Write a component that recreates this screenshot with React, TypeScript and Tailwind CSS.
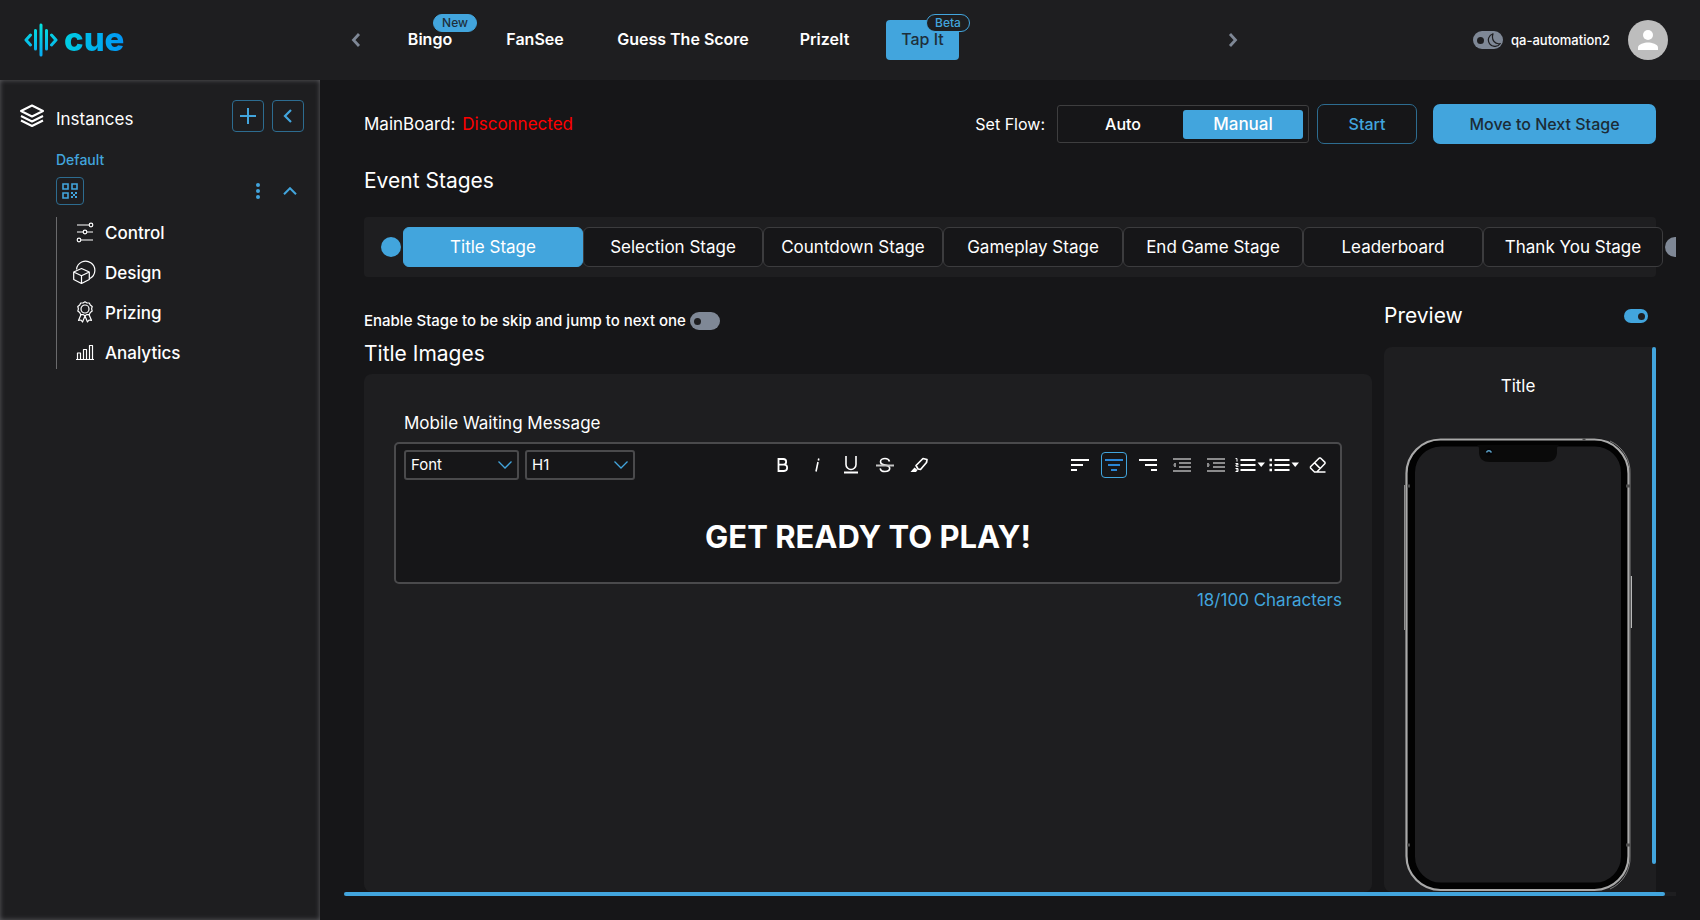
import React, { useState } from "react";

function Logo() {
  return (
    <a href="#" aria-label="cue" className="flex items-center gap-[6px]">
      <svg width="34" height="34" viewBox="0 0 34 34" fill="none" strokeLinecap="round" strokeLinejoin="round">
        <defs>
          <linearGradient id="mark" x1="0" y1="0" x2="0" y2="34" gradientUnits="userSpaceOnUse">
            <stop stopColor="#04e3dc" />
            <stop offset="1" stopColor="#08a8f2" />
          </linearGradient>
        </defs>
        <g stroke="url(#mark)" strokeWidth="3">
          <path d="M17.010 2L17 32M11.510 7.500l-.010 18.500M22.510 7.500l-.010 18.500" />
          <path d="M6.500 12L2 17l4.500 5M27.500 12l4.500 5-4.500 5" />
        </g>
      </svg>
      <span className="bg-gradient-to-r from-[#04cfe2] to-[#0494f4] bg-clip-text pb-[2px] text-[33px] leading-[38px] font-extrabold text-transparent">
        cue
      </span>
    </a>
  );
}

const games = [
  { name: "Bingo", width: "w-[74px]", badge: "New" },
  { name: "FanSee", width: "w-[88px]" },
  { name: "Guess The Score", width: "w-[160px]" },
  { name: "PrizeIt", width: "w-[75px]" },
  { name: "Tap It", width: "w-[73px]", badge: "Beta", active: true },
];

function Arrow({ flip = false }: { flip?: boolean }) {
  return (
    <svg width="10" height="14" viewBox="0 0 10 14" fill="none" stroke="#7f8896" strokeWidth="2.800">
      <path d={flip ? "M2 1l5.500 6L2 13" : "M8 1L2.500 7 8 13"} />
    </svg>
  );
}

function Header() {
  return (
    <header className="flex h-20 shrink-0 items-center bg-[#1e1e20] pr-8 pl-6">
      <div className="w-[327px] shrink-0">
        <Logo />
      </div>
      <button aria-label="Previous games">
        <Arrow />
      </button>
      <nav className="ml-8 flex w-[835px] shrink-0 items-center gap-6">
        {games.map((g) => (
          <button
            key={g.name}
            className={`relative h-10 rounded-[4px] pb-[2px] text-base whitespace-nowrap ${g.width} ${g.active ? "bg-[#42a5dd] font-medium text-[#1e2f3b]" : "font-semibold text-white"}`}
          >
            {g.name}
            {g.badge && (
              <span
                className={`absolute -top-[6px] left-10 flex h-[18px] w-11 items-center justify-center rounded-full border border-[#42a5dd] text-xs font-medium ${g.active ? "bg-[#1e1e20] text-[#42a5dd]" : "bg-[#42a5dd] text-[#1e2f3b]"}`}
              >
                {g.badge}
              </span>
            )}
          </button>
        ))}
      </nav>
      <button aria-label="Next games">
        <Arrow flip />
      </button>
      <div className="ml-auto flex items-center">
        <button aria-label="Dark mode" className="flex h-[18px] w-[30px] items-center justify-between rounded-full bg-[#7f8896] pr-[2px] pl-1">
          <span className="size-[7px] rounded-full bg-[#1e1e20]" />
          <svg width="14" height="14" viewBox="0 0 14 14" fill="none" stroke="#1e1e20" strokeWidth="1.200" strokeLinejoin="round">
            <path d="M6 .700A6.500 6.500 0 1 0 13.300 10.500Q9.500 11.500 7 8.500T6 .700z" />
          </svg>
        </button>
        <span className="mx-2 w-[101px] pt-[2px] text-[13px] font-medium whitespace-nowrap text-white">qa-automation2</span>
        <button aria-label="Account" className="ml-2 flex size-10 items-center justify-center rounded-full bg-[#bdbdbd]">
          <svg width="20" height="20" viewBox="0 0 20 20" fill="#fff">
            <circle cx="10" cy="5" r="5" />
            <path d="M0 20v-2.500C0 14 6.500 12.500 10 12.500s10 1.500 10 5V20z" />
          </svg>
        </button>
      </div>
    </header>
  );
}

const menu = [
  {
    name: "Control",
    icon: (
      <>
        <path d="M4 5h12M4 12h6M14 12h6M8 20h12" />
        <circle cx="18" cy="5" r="1.800" />
        <circle cx="12" cy="12" r="1.800" />
        <circle cx="6" cy="20" r="1.800" />
      </>
    ),
  },
  {
    name: "Design",
    icon: (
      <>
        <path d="M3.500 9.500A9.200 9.200 0 1 1 17 18.500" />
        <path d="M8.500 8.500l7.800 3.500v7.500L8.500 23.500.700 19.500V12zM.700 12l7.800 3.700 7.800-3.700M8.500 15.700v7.800" />
      </>
    ),
  },
  {
    name: "Prizing",
    icon: (
      <>
        <circle cx="12" cy="9" r="4" />
        <path d="M12 1.800l2 1.200 2.300 0 1 2.100 1.900 1.400-.600 2.300.600 2.300-1.900 1.400-1 2.100-2.300 0-2 1.200-2-1.200-2.300 0-1-2.100-1.900-1.400.600-2.300-.600-2.300 1.900-1.400 1-2.100 2.300 0z" />
        <path d="M8 14.500L5.500 20.500l2.500-.5 1.500 2 2.500-6 2.500 6 1.500-2 2.500.5L16 14.500" />
      </>
    ),
  },
  {
    name: "Analytics",
    icon: <path d="M3 19.500h18M4.500 19.500v-6.500h3v6.500M10.500 19.500v-10h3v10M16.500 19.500v-14h3v14" />,
  },
];

function Sidebar() {
  return (
    <aside className="w-80 shrink-0 bg-[#1e1e20] px-4 pt-5 shadow-[inset_0_0_5px_#5e5e62]">
      <div className="flex items-center pl-1">
        <svg width="24" height="24" viewBox="0 0 24 24" fill="none" stroke="#fff" strokeWidth="2" strokeLinejoin="round">
          <path d="M12 1.500L23 7 12 12.500 1 7zM1 12l11 5.500L23 12M1 16.500L12 22l11-5.500" />
        </svg>
        <h2 className="ml-3 flex-1 pt-[6px] text-[17px] leading-6">Instances</h2>
        <button aria-label="Add instance" className="flex size-8 items-center justify-center rounded-[4px] border border-[#2d6c90]">
          <svg width="16" height="16" viewBox="0 0 16 16" stroke="#42a5dd" strokeWidth="2">
            <path d="M8 0v16M0 8h16" />
          </svg>
        </button>
        <button aria-label="Collapse sidebar" className="ml-2 flex size-8 items-center justify-center rounded-[4px] border border-[#2d6c90]">
          <svg width="10" height="14" viewBox="0 0 10 14" fill="none" stroke="#42a5dd" strokeWidth="2.200">
            <path d="M8 1L2 7l6 6" />
          </svg>
        </button>
      </div>
      <div className="pl-10">
        <a href="#" className="mt-[18px] block text-sm leading-5 font-medium text-[#42a5dd]">
          Default
        </a>
        <div className="mt-[7px] flex items-center pr-[7px]">
          <button aria-label="QR code" className="flex size-7 items-center justify-center rounded-[4px] border border-[#2d6c90]">
            <svg width="16" height="16" viewBox="0 0 16 16" fill="none" stroke="#42a5dd" strokeWidth="1.600">
              <path d="M1 1h5v5H1zM10 1h5v5h-5zM1 10h5v5H1z" />
              <path
                d="M9 9h2v2H9zM13 9h2v2h-2zM11 11h2v2h-2zM9 13h2v2H9zM13 13h2v2h-2z"
                fill="#42a5dd"
                stroke="none"
              />
            </svg>
          </button>
          <button aria-label="More" className="ml-auto">
            <svg width="4" height="16" viewBox="0 0 4 16" fill="#42a5dd">
              <circle cx="2" cy="2" r="2" />
              <circle cx="2" cy="8" r="2" />
              <circle cx="2" cy="14" r="2" />
            </svg>
          </button>
          <button aria-label="Collapse" className="ml-[23px]">
            <svg width="14" height="8" viewBox="0 0 14 8" fill="none" stroke="#42a5dd" strokeWidth="2">
              <path d="M1 7.200l6-6 6 6" />
            </svg>
          </button>
        </div>
        <ul className="mt-3 border-l border-[#6a6a6c]">
          {menu.map((m, i) => (
            <li key={m.name}>
              <a
                href="#"
                className={`flex items-center pl-4 text-[17px] leading-6 font-medium ${i === 0 ? "h-[35px] pb-[5px]" : i === 3 ? "h-[37px] pt-[3px]" : "h-10"}`}
              >
                <svg width="24" height="24" viewBox="0 0 24 24" fill="none" stroke="#fff" strokeWidth="1.200" strokeLinejoin="round">
                  {m.icon}
                </svg>
                <span className="ml-2 pt-px">{m.name}</span>
              </a>
            </li>
          ))}
        </ul>
      </div>
    </aside>
  );
}

const stages = ["Title Stage", "Selection Stage", "Countdown Stage", "Gameplay Stage", "End Game Stage", "Leaderboard", "Thank You Stage"];

function Tool({ label, children }: { label: string; children: React.ReactNode }) {
  return (
    <button aria-label={label} className="flex h-[30px] w-[34px] items-center justify-center">
      {children}
    </button>
  );
}

function Bars({ d, color = "#fff" }: { d: string; color?: string }) {
  return (
    <svg width="18" height="14" viewBox="0 0 18 14" fill="none" stroke={color} strokeWidth="2">
      <path d={d} />
    </svg>
  );
}

function SelectBox({ label, value, width }: { label: string; value: string; width: string }) {
  return (
    <div className={`relative ${width}`}>
      <select
        aria-label={label}
        className="h-[30px] w-full appearance-none rounded-[3px] border-2 border-[#4a4a4c] bg-[#161618] pl-[5px] text-[15px] leading-5 text-white"
      >
        <option>{value}</option>
      </select>
      <svg className="pointer-events-none absolute top-[11px] right-[7px]" width="14" height="8" viewBox="0 0 14 8" fill="none" stroke="#42a5dd" strokeWidth="1.300">
        <path d="M.500.500L7 7l6.500-6.500" />
      </svg>
    </div>
  );
}

function Editor() {
  return (
    <div className="h-[142px] rounded-[5px] border-2 border-[#4a4a4c] bg-[#161618] pt-[6px] pr-[5px] pl-2">
      <div className="flex items-center justify-between">
        <div className="flex gap-[6px]">
          <SelectBox label="Font" value="Font" width="w-[115px]" />
          <SelectBox label="Heading" value="H1" width="w-[110px]" />
        </div>
        <div className="flex pl-1">
          <Tool label="Bold">
            <svg width="12" height="16" viewBox="0 0 12 16" fill="none" stroke="#fff" strokeWidth="1.800">
              <path d="M1.500 2h4.800a2.800 2.800 0 0 1 0 5.700H1.500zM1.500 7.700h5.500a3.100 3.100 0 0 1 0 6.300H1.500z" />
            </svg>
          </Tool>
          <Tool label="Italic">
            <svg width="8" height="16" viewBox="0 0 8 16" fill="none" stroke="#fff" strokeWidth="1.600">
              <path d="M5 5L3 14.500M5.800 1.500l-.4 2" />
            </svg>
          </Tool>
          <Tool label="Underline">
            <svg width="14" height="18" viewBox="0 0 14 18" fill="none" stroke="#fff" strokeWidth="1.600">
              <path d="M2 0v8.500a5 5 0 0 0 10 0V0" />
              <path d="M0 16.500h14" strokeWidth="2" />
            </svg>
          </Tool>
          <Tool label="Strikethrough">
            <svg width="18" height="16" viewBox="0 0 18 16" fill="none" stroke="#fff" strokeWidth="1.600">
              <path d="M13.500 4.500C13 2.500 11.500 1.500 9 1.500S4.500 2.800 4.500 4.700 6 7.500 9 8s4.700 1.500 4.700 3.300-2 3.200-4.700 3.200-4.500-1.200-4.800-3.200" />
              <path d="M0 8.500h18" stroke="#c4c4c4" strokeWidth="2" />
            </svg>
          </Tool>
          <Tool label="Highlight">
            <svg width="18" height="16" viewBox="0 0 18 16" fill="none" stroke="#fff" strokeWidth="1.700" strokeLinejoin="round">
              <path d="M6 8.500L13 1.500 17 2.500 16.500 5.500 10.500 12.500 8 12z" />
              <path d="M4.500 10.500l3 2.500-1.500 2H.500z" fill="#fff" stroke="none" />
            </svg>
          </Tool>
        </div>
        <div className="flex">
          <Tool label="Align left">
            <Bars d="M0 2h18M0 7h12M0 12h6" />
          </Tool>
          <Tool label="Align center">
            <span className="flex size-[26px] shrink-0 items-center justify-center rounded-[4px] border border-[#42a5dd]">
              <Bars color="#2b86d6" d="M0 2h18M3 7h12M6 12h6" />
            </span>
          </Tool>
          <Tool label="Align right">
            <Bars d="M0 2h18M6 7h12M12 12h6" />
          </Tool>
          <Tool label="Outdent">
            <Bars color="#8b8b8c" d="M0 1h18M6 5h12M6 9h12M0 13h18M2 5v4M1 6.500v1" />
          </Tool>
          <Tool label="Indent">
            <Bars color="#8b8b8c" d="M0 1h18M6 5h12M6 9h12M0 13h18M1 5v4M2 6.500v1" />
          </Tool>
          <Tool label="Numbered list">
            <svg width="30" height="14" viewBox="0 0 30 14" fill="none" stroke="#fff" strokeWidth="2">
              <path d="M5.500 2h15M5.500 7h15M5.500 12h15" />
              <path d="M.500.600h1.500v3M.500 5.500h2.500v1.300H1v1.500h2.500M.500 10.500h2.500v3H.500M1 12h2" strokeWidth="1" />
              <path d="M22.500 4.500h7.500L26.200 9z" fill="#fff" stroke="none" />
            </svg>
          </Tool>
          <Tool label="Bulleted list">
            <svg width="30" height="14" viewBox="0 0 30 14" fill="none" stroke="#fff" strokeWidth="2">
              <path d="M5.500 2h15M5.500 7h15M5.500 12h15" />
              <path d="M.500 2h2.500M.500 7h2.500M.500 12h2.500" strokeWidth="2.600" />
              <path d="M22.500 4.500h7.500L26.200 9z" fill="#fff" stroke="none" />
            </svg>
          </Tool>
          <Tool label="Clear formatting">
            <svg width="18" height="16" viewBox="0 0 18 16" fill="none" stroke="#fff" strokeWidth="1.500" strokeLinejoin="round">
              <path d="M5.500 15L1.500 11V9.800L10.300 1h1.200L16 5.400v1.200L7.800 15zM5 15h11.500M5.600 5.900l5.500 5.500" />
            </svg>
          </Tool>
        </div>
      </div>
      <div className="flex justify-center pt-[33px] pr-[3px]">
        <h1 className="text-[31px] leading-[48px] font-bold">GET READY TO PLAY!</h1>
      </div>
    </div>
  );
}

function Phone() {
  return (
    <svg className="mt-10 shrink-0" width="228" height="456" viewBox="0 0 228 456" fill="none">
      <path d="M.500 47v145" stroke="#8f8f8f" />
      <path d="M227.500 138v52" stroke="#b9b9b9" strokeWidth="1.400" />
      <rect x="7" y="4.500" width="214" height="444" rx="30" stroke="#020202" strokeWidth="8" />
      <rect x="2.500" y="1.500" width="222" height="450.500" rx="34" stroke="#a9a9a9" strokeWidth="2.200" />
      <path d="M206 3a34 34 0 0 1 20 33v382a34 34 0 0 1-20 33" stroke="#7a7a7a" strokeWidth="1" />
      <path d="M180 .500v2M3 48h3M222 48h4M3 407h3M222 407h4" stroke="#4c4c4c" strokeWidth="3" />
      <path d="M72 7h84q-3 0-3 4v3q0 10-11 10H86q-11 0-11-10v-3q0-4-3-4z" fill="#0a0a0a" />
      <circle cx="85" cy="14" r="3.500" fill="#050508" />
      <path d="M82.500 14.500q1-2.500 3.500-1.500l1.500 1.500" stroke="#5a9fc4" strokeWidth="1.500" />
    </svg>
  );
}

export default function App() {
  const [skip, setSkip] = useState(false);
  return (
    <div className="flex h-screen flex-col overflow-hidden bg-[#161618] font-['Inter','Open_Sans',sans-serif] text-white">
      <Header />
      <div className="flex min-h-0 flex-1">
        <Sidebar />
        <main className="mr-6 mb-6 ml-6 flex min-w-0 flex-1 flex-col overflow-hidden pt-6">
          <div className="flex shrink-0 items-center pr-5 pl-5">
            <p className="text-[17px] leading-6">
              MainBoard: <span className="ml-[2px] text-[#ff0000]">Disconnected</span>
            </p>
            <span className="mr-3 ml-auto text-base">Set Flow:</span>
            <div className="mr-2 flex h-[38px] w-[252px] items-center rounded-[3px] border border-[#3e3e3f] px-[5px]">
              <button className="h-[29px] flex-1 pb-px text-base font-medium">Auto</button>
              <button className="h-[29px] flex-1 rounded-[3px] bg-[#42a5dd] pb-px text-[17px] leading-6 font-medium">Manual</button>
            </div>
            <button className="mr-4 h-10 w-[100px] rounded-[7px] border border-[#2d6c90] pb-px text-base font-medium text-[#42a5dd]">
              Start
            </button>
            <button className="h-10 w-[223px] rounded-[7px] bg-[#42a5dd] pb-px text-base font-medium text-[#1c2c36]">Move to Next Stage</button>
          </div>

          <h2 className="mt-[23px] shrink-0 pl-5 text-[21px] leading-7">Event Stages</h2>
          <div className="mx-5 mt-[22px] flex h-[60px] shrink-0 items-center rounded-[4px] bg-[#1e1e20] pl-[17px]">
            <span className="size-5 shrink-0 rounded-full bg-[#42a5dd]" />
            <div className="mr-[2px] ml-[2px] flex shrink-0">
              {stages.map((s, i) => (
                <button
                  key={s}
                  className={`h-10 w-[180px] rounded-[6px] border pb-px text-[17px] leading-6 ${i === 0 ? "border-[#42a5dd] bg-[#42a5dd]" : "border-[#3c3c3e] bg-[#161618]"}`}
                >
                  {s}
                </button>
              ))}
            </div>
            <span className="size-5 shrink-0 rounded-full bg-[#7f8896]" />
          </div>

          <div className="flex min-h-0 flex-1 gap-3 pr-5 pl-5">
            <section className="flex flex-1 flex-col pt-[34px]">
              <div className="flex h-5 items-center gap-1">
                <span className="text-[15px] leading-5 font-medium">Enable Stage to be skip and jump to next one</span>
                <button
                  aria-label="Enable stage skip"
                  onClick={() => setSkip(!skip)}
                  className={`flex h-[18px] w-[30px] items-center rounded-full px-1 ${skip ? "justify-end bg-[#42a5dd]" : "bg-[#7f8896]"}`}
                >
                  <span className="size-[7px] rounded-full bg-[#1e1e20]" />
                </button>
              </div>
              <h2 className="mt-[9px] text-[21px] leading-7">Title Images</h2>
              <div className="mt-[6px] flex-1 rounded-[8px] bg-[#1e1e20] px-[30px] pt-[37px]">
                <p className="pl-[10px] text-[17px] leading-6">Mobile Waiting Message</p>
                <div className="mt-[7px]">
                  <Editor />
                </div>
                <p className="mt-1 text-right text-[17px] leading-6 text-[#42a5dd]">18/100 Characters</p>
              </div>
            </section>
            <aside className="flex w-[272px] shrink-0 flex-col pt-[25px]">
              <div className="flex h-7 items-center justify-between pr-2">
                <h2 className="text-[21px] leading-7">Preview</h2>
                <button aria-label="Show preview" className="flex h-[14px] w-6 items-center justify-end rounded-full bg-[#42a5dd] px-[3px]">
                  <span className="size-[7px] rounded-full bg-[#1e1e20]" />
                </button>
              </div>
              <div className="mt-[17px] flex min-h-0 flex-1 overflow-hidden rounded-l-[8px] bg-[#1e1e20]">
                <div className="flex flex-1 flex-col items-center pt-[27px]">
                  <p className="text-[17px] leading-6">Title</p>
                  <Phone />
                </div>
                <div className="mb-7 w-1 rounded-full bg-[#42a5dd]" />
              </div>
            </aside>
          </div>
          <div className="h-1 shrink-0 bg-[#1e1e20] pr-[11px]">
            <div className="h-1 rounded-full bg-[#42a5dd]" />
          </div>
        </main>
      </div>
    </div>
  );
}
